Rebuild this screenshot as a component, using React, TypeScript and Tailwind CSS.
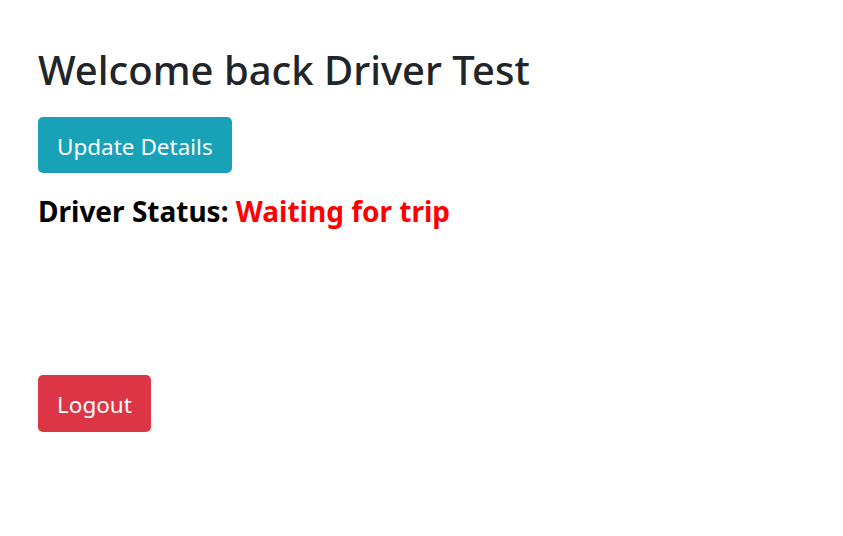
import React from "react";

export default function App() {
  return (
    <div className="min-h-[536px] w-full bg-white px-[38px] pt-[46px]" style={{ fontFamily: '"Noto Sans", "Open Sans", sans-serif' }}>
      <h1 className="text-[40px] leading-[48px] font-medium text-[#212529]">Welcome back Driver Test</h1>
      <button className="mt-[23px] h-[56px] px-[19px] pt-[3px] rounded-[5px] bg-[#17a2b8] text-white text-[22.5px] leading-[30px]">Update Details</button>
      <h4 className="mt-[21px] text-[28px] leading-[34px] font-bold text-black">
        Driver Status: <span className="text-[#ff0000]">Waiting for trip</span>
      </h4>
      <div className="h-[147px]" />
      <button className="h-[57px] px-[19px] pt-[2px] rounded-[5px] bg-[#dc3545] text-white text-[22.5px] leading-[30px]">Logout</button>
    </div>
  );
}
